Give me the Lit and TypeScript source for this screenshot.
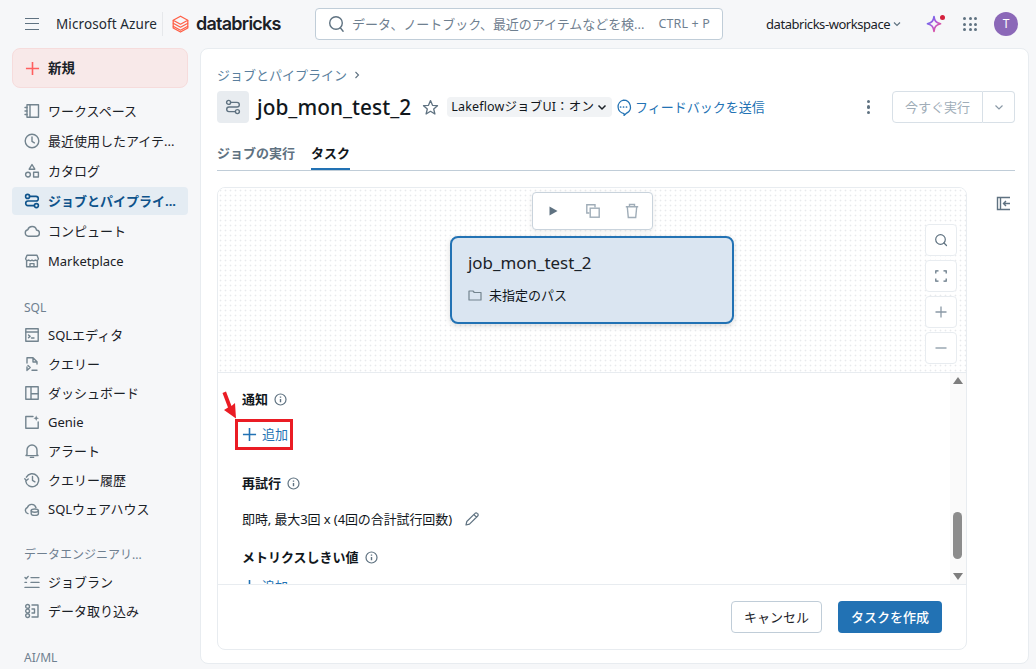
import { LitElement, html, css, svg } from "lit";
import { customElement } from "lit/decorators.js";

const ic = (body: unknown, size = 16, cls = "") => html`<svg class=${cls} width=${size} height=${size} viewBox="0 0 16 16" fill="none" stroke="currentColor" stroke-width="1.4" stroke-linecap="round" stroke-linejoin="round">${body}</svg>`;

const flow = svg`<circle cx="3.600" cy="3.400" r="2"/><circle cx="12.400" cy="12.600" r="2"/><path d="M5.600 3.400H12a2.300 2.300 0 0 1 0 4.600H4a2.300 2.300 0 0 0 0 4.600h6.400"/>`;
const icons: Record<string, unknown> = {
  workspace: svg`<rect x="3" y="1.800" width="11.500" height="12.400"/><path d="M6 2v12M1 4.500h2M1 8h2M1 11.500h2"/>`,
  clock: svg`<circle cx="8" cy="8" r="6.800"/><path d="M8 4v4.400l2.400 1.400"/>`,
  catalog: svg`<path d="M8 1.500l2.800 4.700H5.200z"/><circle cx="4" cy="11.600" r="2.400"/><rect x="9.600" y="9.200" width="4.800" height="4.800"/>`,
  flow,
  cloud: svg`<path d="M4.400 13.200a3.300 3.300 0 0 1-.6-6.500 4.500 4.500 0 0 1 8.700.3 3.100 3.100 0 0 1-.4 6.200z"/>`,
  market: svg`<path d="M2.600 7.500v6.300h10.800V7.500M3 2.200h10l1.400 3.600a1.900 1.900 0 0 1-3.200 1.200 2.400 2.400 0 0 1-3.200 0 2.400 2.400 0 0 1-3.200 0 1.900 1.900 0 0 1-3.200-1.200z"/><path d="M6 13.600v-3h4v3"/>`,
  editor: svg`<rect x="1.800" y="1.800" width="12.400" height="12.400"/><path d="M1.800 5h12.400M4.500 8l1.600 1.400-1.600 1.400M7.500 11h2.500"/>`,
  query: svg`<path d="M3 7V1.800h6l4 4V8M9 2v4h4M3 14.500V11M4 9.500l2.200 2L4 13.500M8 14.200h5"/>`,
  dash: svg`<rect x="1.800" y="1.800" width="12.400" height="12.400"/><path d="M7 1.800v12.400M7 8.800h7.200"/>`,
  genie: svg`<path d="M9 2.500H1.800v11.700h12.400V8"/><path d="M12.200 1.400l.8 2 2 .8-2 .8-.8 2-.8-2-2-.8 2-.8z" fill="currentColor" stroke="none"/>`,
  bell: svg`<path d="M3 11.600V7a5 5 0 0 1 10 0v4.600l1 1H2zM6.400 14.400h3.200"/>`,
  history: svg`<path d="M2.400 5.200A6.500 6.500 0 1 1 1.700 9"/><path d="M.8 6.800l1.600 1.800L4.200 7M8.500 4.400v4l2.400 1.400"/>`,
  warehouse: svg`<path d="M4 12.600a3.200 3.200 0 0 1-.6-6.100 4.500 4.500 0 0 1 8.600.2"/><ellipse cx="10.800" cy="9.600" rx="3.600" ry="1.600"/><path d="M7.200 9.600v3.200c0 .9 1.600 1.600 3.600 1.600s3.600-.7 3.600-1.600V9.600"/>`,
  jobrun: svg`<path d="M1 3.600l1.200 1.200 2-2.400M7 3.600h8M1 8.400h1.500M7 8.400h8M1 13.400h14"/>`,
  ingest: svg`<circle cx="3.600" cy="3.400" r="1.900"/><circle cx="3.600" cy="8" r="1.900"/><circle cx="3.600" cy="12.600" r="1.900"/><path d="M8 2h6v12H8M8 6h2.500v4H8"/>`,
};

const nav = (i: string, t: string, active = false) => html`<a class="item ${active ? "active" : ""}">${ic(icons[i])}<span>${t}</span></a>`;
const info = html`<svg class="info" width="13" height="13" viewBox="0 0 13 13" fill="none" stroke="currentColor" stroke-width="1.200"><circle cx="6.500" cy="6.500" r="5.500"/><path d="M6.500 6v3.200M6.500 3.600v1.100" stroke-width="1.400"/></svg>`;
const plus = (s = 16) => html`<svg width=${s} height=${s} viewBox="0 0 16 16" fill="none" stroke="currentColor" stroke-width="1.700"><path d="M8 1v14M1 8h14"/></svg>`;

@customElement("app-root")
export class AppRoot extends LitElement {
  static styles = css`
    :host { display: block; width: 1036px; height: 669px; overflow: hidden; position: relative; background: #f6f7f9; color: #11171c;
      font: 13px/20px "Noto Sans", "Noto Sans CJK JP", sans-serif; }
    * { box-sizing: border-box; }
    svg { flex: none; display: block; }
    .top { height: 48px; display: flex; align-items: center; }
    .burger { margin-left: 25px; width: 14px; height: 12px; border-top: 1.5px solid #5f7281; border-bottom: 1.5px solid #5f7281; position: relative; }
    .burger::after { content: ""; position: absolute; left: 0; right: 0; top: 3.7px; height: 1.5px; background: #5f7281; }
    .azure { margin-left: 17px; font-size: 13.5px; color: #1f2a33; letter-spacing: .1px; width: 106px; white-space: nowrap; }
    .vsep { width: 1px; height: 24px; background: #e6e8eb; margin-right: 9px; }
    .dbx { font: 600 18px/24px "Inter", sans-serif; letter-spacing: -.75px; color: #1b2127; margin-left: 7px; width: 103px; }
    .search { margin-left: 16px; width: 408px; height: 32px; background: #fff; border: 1px solid #c0cdd8; border-radius: 4px; display: flex; align-items: center; padding: 0 12px 0 12px; color: #6f8090; }
    .search .ph { margin-left: 7px; flex: 1; white-space: nowrap; font-size: 13px; letter-spacing: -.05px; }
    .search .key { font-size: 12.5px; white-space: nowrap; letter-spacing: .15px; }
    .wsname { margin-left: 43px; font-size: 13px; white-space: nowrap; color: #1a2228; letter-spacing: -.45px; display: flex; align-items: center; gap: 2px; }
    .spark { margin-left: 24px; position: relative; }
    .dot { position: absolute; top: 0; right: -3px; width: 5px; height: 5px; border-radius: 50%; background: #d4213d; }
    .grid9 { margin-left: 21px; display: grid; grid-template-columns: repeat(3, 3px); gap: 2.5px; }
    .grid9 i { width: 3px; height: 3px; border-radius: 50%; background: #5f7281; }
    .avatar { margin-left: 17px; width: 24px; height: 24px; border-radius: 50%; background: #8b68b8; color: #fff; font-size: 12px; display: flex; align-items: center; justify-content: center; }

    .body { display: flex; height: 621px; }
    .side { width: 200px; flex: none; padding: 0 12px; overflow: hidden; }
    .new { height: 40px; background: #f8e9e9; border: 1px solid #f6dcdc; border-radius: 8px; display: flex; align-items: center; gap: 8px; padding-left: 12px; font-weight: 700; font-size: 13.5px; color: #1a2228; margin-bottom: 9px; }
    .new svg { color: #ff5f5f; }
    .group1 { display: flex; flex-direction: column; gap: 2px; }
    .group2 { display: flex; flex-direction: column; gap: 1px; }
    .item { height: 28px; display: flex; align-items: center; gap: 8px; padding-left: 12px; border-radius: 4px; color: #1b2127; white-space: nowrap; font-size: 13px; }
    .item svg { color: #73848f; }
    .item.active { background: #e4ecf3; color: #0e538b; font-weight: 700; }
    .item.active svg { color: #0e538b; stroke-width: 1.6; }
    .sect { color: #6f8090; font-size: 12px; padding-left: 12px; height: 20px; line-height: 20px; white-space: nowrap; }
    .s-sql { margin-top: 23px; margin-bottom: 3px; }
    .s-de { margin-top: 22px; margin-bottom: 3px; }
    .s-ai { margin-top: 23px; }

    .panel { width: 829px; height: 616px; background: #fff; border: 1px solid #e8ecf0; border-radius: 8px; padding: 16px 13px 0 16px; display: flex; flex-direction: column; }
    .crumb { color: #5a7f9e; font-size: 13px; height: 20px; display: flex; align-items: center; gap: 6px; }
    .crumb svg { color: #5f7281; }
    .titlerow { display: flex; align-items: center; height: 32px; margin-top: 6px; }
    .jobicon { width: 32px; height: 32px; background: #e8ecf0; border-radius: 4px; display: flex; align-items: center; justify-content: center; color: #5f7281; }
    .title { margin-left: 8px; font: 500 20.8px/32px "Noto Sans", sans-serif; color: #11171c; letter-spacing: .05px; }
    .star { margin-left: 11px; color: #5f7281; }
    .pill { margin-left: 8px; height: 20px; background: #f1f3f5; border-radius: 4px; padding: 0 4px; display: flex; align-items: center; gap: 2px; font-size: 12.5px; white-space: nowrap; letter-spacing: .15px; }
    .fb { margin-left: 2px; color: #2272b4; display: flex; align-items: center; gap: 2px; white-space: nowrap; font-size: 13px; }
    .spacer { flex: 1; }
    .kebab { display: flex; flex-direction: column; gap: 2.5px; margin-right: 22px; }
    .kebab i { width: 3.2px; height: 3.2px; border-radius: 50%; background: #5f7281; }
    .runbtn { width: 91px; height: 32px; border: 1px solid #d8e0e7; border-radius: 4px 0 0 4px; color: #a0adb8; display: flex; align-items: center; justify-content: center; }
    .runarrow { width: 32px; height: 32px; border: 1px solid #d8e0e7; border-left: 0; border-radius: 0 4px 4px 0; color: #8a99a6; display: flex; align-items: center; justify-content: center; }
    .tabs { margin-top: 12px; height: 36px; width: 798px; border-bottom: 1px solid #c0cdd8; display: flex; gap: 16px; align-items: flex-start; padding-top: 8px; flex: none; }
    .tab { font-weight: 700; color: #5f7281; height: 27px; font-size: 13px; }
    .tab.on { color: #11171c; border-bottom: 2px solid #2272b4; }
    .work { display: flex; margin-top: 16px; flex: none; }
    .card { width: 750px; height: 463px; border: 1px solid #e8ecf0; border-radius: 8px; display: flex; flex-direction: column; overflow: hidden; }
    .canvas { height: 185px; flex: none; position: relative; border-bottom: 1px solid #e8ecf0;
      background-color: #fff; background-image: radial-gradient(#e8eaec .8px, transparent 1.1px); background-size: 5px 5px; }
    .tools { position: absolute; left: 314px; top: 4px; width: 121px; height: 38px; background: #fff; border: 1px solid #c9d3dc; border-radius: 4px; box-shadow: 0 2px 6px rgba(0,0,0,.08); display: flex; align-items: center; justify-content: space-between; padding: 0 12px; color: #a0adb8; }
    .node { position: absolute; left: 232px; top: 48px; width: 284px; height: 88px; background: #dae5f1; border: 2px solid #2272b4; border-radius: 8px; box-shadow: 0 2px 6px rgba(0,0,0,.14); padding: 14px 16px; }
    .nodename { font-size: 16.900px; line-height: 22px; color: #1a2228; }
    .nodepath { display: flex; align-items: center; gap: 7px; margin-top: 11px; font-size: 13px; }
    .nodepath svg { color: #73848f; }
    .zoom { position: absolute; right: 9px; top: 36px; display: flex; flex-direction: column; gap: 4px; }
    .zoom div { width: 32px; height: 32px; border: 1px solid #e8ecf0; background: #fff; border-radius: 4px; display: flex; align-items: center; justify-content: center; color: #5f7281; }
    .zoom div.dim { color: #8a99a6; }
    .scrollarea { flex: 1; min-height: 0; display: flex; overflow: hidden; }
    .content { flex: 1; padding: 16px 24px 0; overflow: hidden; }
    .h { font-weight: 700; font-size: 13px; display: flex; align-items: center; gap: 6px; height: 20px; }
    .info { color: #5f7281; }
    .add { display: flex; align-items: center; gap: 5px; color: #2272b4; height: 20px; font-size: 13px; }
    .add svg { color: #2272b4; }
    .add.a1 { margin-top: 15px; }
    .add.a2 { margin-top: 9px; }
    .h.h2 { margin-top: 29px; }
    .h.h3 { margin-top: 18px; }
    .retry { margin-top: 16px; display: flex; align-items: center; gap: 12px; font-size: 13px; letter-spacing: -.1px; height: 20px; }
    .retry svg { color: #5f7281; }
    .sbar { width: 16px; flex: none; background: #fafafa; position: relative; }
    .sbar .up { position: absolute; left: 3px; top: 4px; width: 0; height: 0; border: 5px solid transparent; border-top: 0; border-bottom: 7px solid #7d7d7d; }
    .sbar .down { position: absolute; left: 3px; bottom: 4px; width: 0; height: 0; border: 5px solid transparent; border-bottom: 0; border-top: 7px solid #7d7d7d; }
    .sbar .thumb { position: absolute; left: 3px; top: 139px; width: 9px; height: 47px; background: #8c8c8c; border-radius: 5px; }
    .foot { height: 65px; flex: none; border-top: 1px solid #e8ecf0; display: flex; align-items: center; justify-content: flex-end; gap: 16px; padding-right: 24px; }
    .btn { height: 32px; border-radius: 4px; display: flex; align-items: center; justify-content: center; white-space: nowrap; }
    .cancel { width: 91px; border: 1px solid #c0cdd8; color: #1b2127; }
    .create { width: 104px; background: #2272b4; color: #fff; font-weight: 500; }
    .rail { width: 48px; flex: none; padding: 9px 0 0 29px; color: #5f7281; }
    .anno { position: absolute; left: 235px; top: 419px; width: 58px; height: 31px; border: 3px solid #ea1c24; pointer-events: none; }
    .arrow { position: absolute; left: 220px; top: 390px; pointer-events: none; }
  `;

  render() {
    return html`
      <div class="top">
        <div class="burger"></div>
        <div class="azure">Microsoft Azure</div>
        <div class="vsep"></div>
        <svg width="17" height="18" viewBox="0 0 17 18" fill="none" stroke="#ff5f46" stroke-width="1.300" stroke-linejoin="round"><path d="M8.500 1.200L15.800 5.200 8.500 9.200 1.200 5.200z"/><path d="M1.200 5.200V8.200L8.500 12.200 15.800 8.200V5.200"/><path d="M1.200 8.200V11.200L8.500 15.200 15.800 11.200V8.200"/><path d="M1.200 11.200V13L8.500 17 15.800 13V11.200"/></svg>
        <div class="dbx">databricks</div>
        <div class="search">
          <svg width="17" height="18" viewBox="0 0 17 18" fill="none" stroke="#5f7281" stroke-width="1.400" stroke-linecap="round"><circle cx="8" cy="8" r="6.300"/><path d="M12.500 13l2.600 3.200"/></svg>
          <span class="ph">データ、ノートブック、最近のアイテムなどを検...</span>
          <span class="key">CTRL + P</span>
        </div>
        <div class="wsname">databricks-workspace<svg width="10" height="10" viewBox="0 0 10 10" fill="none" stroke="#5f7281" stroke-width="1.200"><path d="M2 3.500L5 6.500 8 3.500"/></svg></div>
        <div class="spark">
          <svg width="16" height="18" viewBox="0 0 16 18" fill="none" stroke-width="1.700" stroke-linejoin="round"><defs><linearGradient id="sg" x1="0" y1="0" x2="1" y2="1"><stop offset="0" stop-color="#4a6cf7"/><stop offset=".5" stop-color="#b05ad8"/><stop offset="1" stop-color="#ff4f7b"/></linearGradient></defs><path d="M8 1.500C8.600 6 9.800 7.500 14.500 8.800 9.800 10 8.600 11.600 8 16.500 7.400 11.600 6 10 1.500 8.800 6 7.500 7.400 6 8 1.500z" stroke="url(#sg)"/></svg>
          <span class="dot"></span>
        </div>
        <div class="grid9">${Array.from({ length: 9 }, () => html`<i></i>`)}</div>
        <div class="avatar">T</div>
      </div>
      <div class="body">
        <nav class="side">
          <div class="new">${plus(15)}<span>新規</span></div>
          <div class="group1">
            ${nav("workspace", "ワークスペース")}
            ${nav("clock", "最近使用したアイテ...")}
            ${nav("catalog", "カタログ")}
            ${nav("flow", "ジョブとパイプライ...", true)}
            ${nav("cloud", "コンピュート")}
            ${nav("market", "Marketplace")}
          </div>
          <div class="sect s-sql">SQL</div>
          <div class="group2">
            ${nav("editor", "SQLエディタ")}
            ${nav("query", "クエリー")}
            ${nav("dash", "ダッシュボード")}
            ${nav("genie", "Genie")}
            ${nav("bell", "アラート")}
            ${nav("history", "クエリー履歴")}
            ${nav("warehouse", "SQLウェアハウス")}
          </div>
          <div class="sect s-de">データエンジニアリ...</div>
          <div class="group2">
            ${nav("jobrun", "ジョブラン")}
            ${nav("ingest", "データ取り込み")}
          </div>
          <div class="sect s-ai">AI/ML</div>
        </nav>
        <main class="panel">
          <div class="crumb">ジョブとパイプライン<svg width="8" height="10" viewBox="0 0 8 10" fill="none" stroke="currentColor" stroke-width="1.100"><path d="M2.500 2L5.500 5 2.500 8"/></svg></div>
          <div class="titlerow">
            <div class="jobicon">${ic(flow, 16)}</div>
            <div class="title">job_mon_test_2</div>
            <svg class="star" width="17" height="17" viewBox="0 0 17 17" fill="none" stroke="currentColor" stroke-width="1.300" stroke-linejoin="round"><path d="M8.500 1.600l2 4.700 5 .4-3.800 3.300 1.200 5-4.400-2.700-4.400 2.700 1.200-5L1.500 6.700l5-.4z"/></svg>
            <div class="pill">LakeflowジョブUI：オン<svg width="12" height="12" viewBox="0 0 12 12" fill="none" stroke="#1b2127" stroke-width="1.500"><path d="M2.500 4.500L6 8 9.500 4.500"/></svg></div>
            <div class="fb"><svg width="19" height="19" viewBox="0 0 17 18" fill="none" stroke="#2272b4" stroke-width="1.200" stroke-linejoin="round"><path d="M8.500 2a6.500 6.500 0 0 1 3 12.300L9 16.500V14.800A6.500 6.500 0 0 1 8.500 2z"/><path d="M5.700 8.500h.1M8.500 8.500h.1M11.300 8.500h.1" stroke-width="1.600" stroke-linecap="round"/></svg><span>フィードバックを送信</span></div>
            <div class="spacer"></div>
            <div class="kebab"><i></i><i></i><i></i></div>
            <div class="runbtn">今すぐ実行</div>
            <div class="runarrow"><svg width="12" height="12" viewBox="0 0 12 12" fill="none" stroke="currentColor" stroke-width="1.200"><path d="M2.500 4.500L6 8 9.500 4.500"/></svg></div>
          </div>
          <div class="tabs"><div class="tab">ジョブの実行</div><div class="tab on">タスク</div></div>
          <div class="work">
            <section class="card">
              <div class="canvas">
                <div class="tools">
                  <svg width="16" height="16" viewBox="0 0 16 16"><path d="M4.500 3.500L12.500 8 4.500 12.500z" fill="#5f7281"/></svg>
                  <svg width="16" height="16" viewBox="0 0 16 16" fill="none" stroke="currentColor" stroke-width="1.400"><path d="M10 4.500V1.800H1.800V10H4.500"/><rect x="5.200" y="5.200" width="9" height="9"/></svg>
                  <svg width="16" height="16" viewBox="0 0 16 16" fill="none" stroke="currentColor" stroke-width="1.400"><path d="M1.800 3.800h12.400M5.500 3.500V1.500h5V3.500M3.300 4l1 10.500h7.400l1-10.500"/></svg>
                </div>
                <div class="node">
                  <div class="nodename">job_mon_test_2</div>
                  <div class="nodepath"><svg width="14" height="14" viewBox="0 0 14 14" fill="none" stroke="currentColor" stroke-width="1.200" stroke-linejoin="round"><path d="M1 3h4l1.300 1.500H13v7.500H1z"/></svg><span>未指定のパス</span></div>
                </div>
                <div class="zoom">
                  <div><svg width="14" height="14" viewBox="0 0 14 14" fill="none" stroke="currentColor" stroke-width="1.200" stroke-linecap="round"><circle cx="6.500" cy="6.500" r="4.800"/><path d="M10 10l2.500 2.500"/></svg></div>
                  <div><svg width="14" height="14" viewBox="0 0 14 14" fill="none" stroke="currentColor" stroke-width="1.200"><path d="M1.800 4.500V1.800H4.500M9.500 1.800h2.700V4.500M12.200 9.500v2.700H9.500M4.500 12.200H1.800V9.500"/></svg></div>
                  <div class="dim"><svg width="14" height="14" viewBox="0 0 14 14" fill="none" stroke="currentColor" stroke-width="1.300"><path d="M7 1.500v11M1.500 7h11"/></svg></div>
                  <div class="dim"><svg width="14" height="14" viewBox="0 0 14 14" fill="none" stroke="currentColor" stroke-width="1.300"><path d="M1.500 7h11"/></svg></div>
                </div>
              </div>
              <div class="scrollarea">
                <div class="content">
                  <div class="h">通知 ${info}</div>
                  <div class="add a1">${plus(15)}<span>追加</span></div>
                  <div class="h h2">再試行 ${info}</div>
                  <div class="retry"><span>即時, 最大3回 x (4回の合計試行回数)</span><svg width="16" height="16" viewBox="0 0 16 16" fill="none" stroke="currentColor" stroke-width="1.200" stroke-linejoin="round"><path d="M2 14l.8-3.500L11 2.300a1.500 1.500 0 0 1 2.200 0l.5.500a1.500 1.500 0 0 1 0 2.200L5.500 13.200zM9.800 3.500l2.700 2.700"/></svg></div>
                  <div class="h h3">メトリクスしきい値 ${info}</div>
                  <div class="add a2">${plus(15)}<span>追加</span></div>
                </div>
                <div class="sbar"><div class="up"></div><div class="thumb"></div><div class="down"></div></div>
              </div>
              <div class="foot"><div class="btn cancel">キャンセル</div><div class="btn create">タスクを作成</div></div>
            </section>
            <div class="rail"><svg width="15" height="15" viewBox="0 0 15 15" fill="none" stroke="currentColor" stroke-width="1.400"><path d="M14 1.500H1.500V13.500H14M4.500 1.500V13.500"/><path d="M14 7.500H7.500M10 5L7.500 7.500 10 10"/></svg></div>
          </div>
        </main>
      </div>
      <svg class="arrow" width="20" height="30" viewBox="0 0 20 30" fill="#ea1c24"><path d="M2.500 3L6 1.500 11.500 16 15 13 16 28.500 4 20 8 17.500z"/></svg>
      <div class="anno"></div>
    `;
  }
}
